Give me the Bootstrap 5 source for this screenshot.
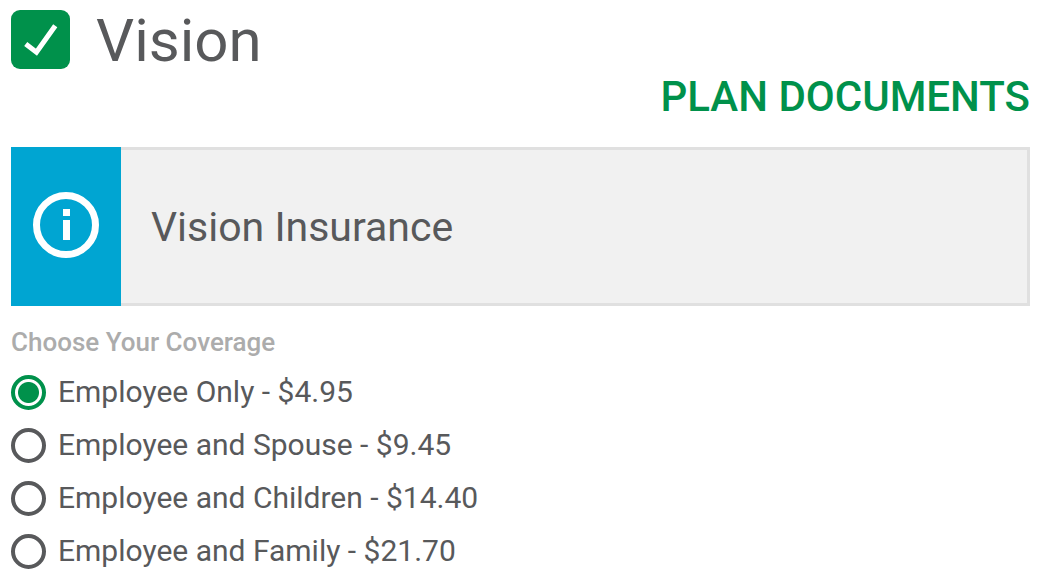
<!DOCTYPE html>
<html lang="en">
<head>
<meta charset="utf-8">
<meta name="viewport" content="width=device-width, initial-scale=1">
<title>Vision coverage</title>
<link href="https://cdn.jsdelivr.net/npm/bootstrap@5.3.0/dist/css/bootstrap.min.css" rel="stylesheet">
<style>
  body { font-family: Roboto, sans-serif; color: #58595b; background: #fff; }
  .plan { padding: 10px 10px 0 11px; }
  .plan-check { gap: 26px; }
  .plan-check .form-check-input {
    width: 59px; height: 59px; margin: 0; border: 0; border-radius: 9px; flex: none;
  }
  .plan-check .form-check-input:checked {
    background-color: #00914b;
    background-image: url("data:image/svg+xml,%3csvg xmlns='http://www.w3.org/2000/svg' viewBox='0 0 58 58'%3e%3cpath fill='none' stroke='%23fff' stroke-width='5' d='M14.5 33.5L25 41.5L43.5 15.5'/%3e%3c/svg%3e");
    background-size: 100% 100%;
  }
  .plan-title { font-size: 60px; line-height: 56px; padding-top: 3px; }
  .plan-docs { font-size: 42px; line-height: 56px; font-weight: 500; color: #00914b; }
  .plan-info { margin-top: 22px; min-height: 159px; background: #f1f1f1; border: 3px solid #e0e0e0; border-left: 0; }
  .plan-info-icon { width: 110px; margin: -3px 0; padding-bottom: 4px; background: #00a5d2; }
  .plan-info-text { font-size: 41px; line-height: 56px; padding-left: 30px; }
  .coverage legend { font-size: 26px; line-height: 32px; font-weight: 500; color: #acacac; margin: 20px 0 8px; }
  .coverage-row { gap: 12px; height: 53px; }
  .coverage-row .form-check-input { width: 35px; height: 35px; margin: 0; border: 4px solid #58595b; flex: none; }
  .coverage-row .form-check-input:checked {
    border-color: #00914b; background-color: #fff;
    background-image: radial-gradient(circle, #00914b 10px, #fff 11px);
  }
  .coverage-row label { font-size: 30px; line-height: 40px; padding-bottom: 1px; }
</style>
</head>
<body>
<main class="plan">
  <div class="plan-check d-flex align-items-center">
    <input class="form-check-input" type="checkbox" id="vision" checked>
    <label class="plan-title" for="vision">Vision</label>
  </div>
  <div class="text-end"><a class="plan-docs d-inline-block text-decoration-none" href="#">PLAN DOCUMENTS</a></div>
  <section class="plan-info d-flex">
    <div class="plan-info-icon d-flex align-items-center justify-content-center">
      <svg width="68" height="68" viewBox="0 0 68 68" aria-hidden="true">
        <circle cx="34" cy="34" r="29.5" fill="none" stroke="#fff" stroke-width="7"/>
        <path fill="#fff" d="M31 18h7v7h-7zM31 29h7v20h-7z"/>
      </svg>
    </div>
    <div class="plan-info-text d-flex align-items-center">Vision Insurance</div>
  </section>
  <fieldset class="coverage">
    <legend>Choose Your Coverage</legend>
    <div class="coverage-row d-flex align-items-center"><input class="form-check-input" type="radio" name="coverage" id="c1" checked><label for="c1">Employee Only - $4.95</label></div>
    <div class="coverage-row d-flex align-items-center"><input class="form-check-input" type="radio" name="coverage" id="c2"><label for="c2">Employee and Spouse - $9.45</label></div>
    <div class="coverage-row d-flex align-items-center"><input class="form-check-input" type="radio" name="coverage" id="c3"><label for="c3">Employee and Children - $14.40</label></div>
    <div class="coverage-row d-flex align-items-center"><input class="form-check-input" type="radio" name="coverage" id="c4"><label for="c4">Employee and Family - $21.70</label></div>
  </fieldset>
</main>
<script src="https://cdn.jsdelivr.net/npm/bootstrap@5.3.0/dist/js/bootstrap.bundle.min.js"></script>
</body>
</html>
